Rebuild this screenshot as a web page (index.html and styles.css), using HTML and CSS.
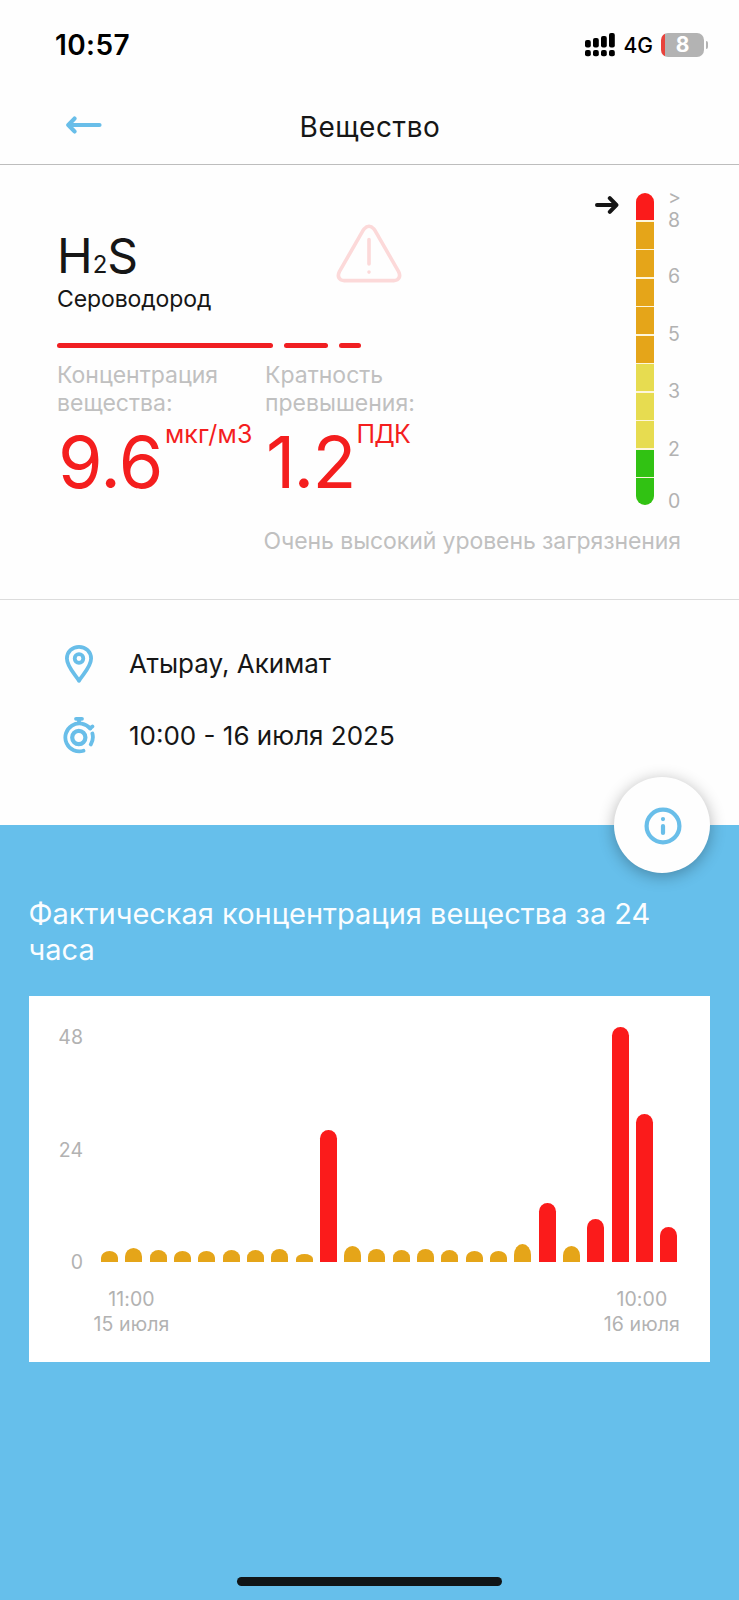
FILE: index.html
```html
<!DOCTYPE html>
<html lang="ru">
<head>
  <meta charset="UTF-8" />
  <meta name="viewport" content="width=device-width, initial-scale=1" />
  <title>Вещество</title>
  <link rel="stylesheet" href="styles.css">
</head>
<body>
  <!-- Статус-бар -->
  <div class="status-bar">
    <span class="time">10:57</span>
    <div class="status-icons">
      <svg class="signal" width="30" height="24" viewBox="0 0 30 24">
        <rect x="0" y="7" width="5.8" height="7.5" rx="2" />
        <rect x="8" y="5" width="5.8" height="9.5" rx="2" />
        <rect x="16" y="3" width="5.8" height="11.5" rx="2" />
        <rect x="24" y="0" width="5.8" height="14.5" rx="2" />
        <rect x="0" y="17" width="5.8" height="6.2" rx="2" />
        <rect x="8" y="17" width="5.8" height="6.2" rx="2" />
        <rect x="16" y="17" width="5.8" height="6.2" rx="2" />
        <rect x="24" y="17" width="5.8" height="6.2" rx="2" />
      </svg>
      <span class="network">4G</span>
      <div class="battery"><span>8</span></div>
      <div class="battery-tip"></div>
    </div>
  </div>

  <!-- Шапка -->
  <header class="header">
    <a class="back" href="#" aria-label="Назад">
      <svg width="36" height="18" viewBox="0 0 36 18" fill="none" stroke="#69bee9" stroke-width="4.2" stroke-linecap="round" stroke-linejoin="round">
        <path d="M33.5 9H2.5M8.5 2.6L2.3 9l6.2 6.4" />
      </svg>
    </a>
    <h1>Вещество</h1>
  </header>

  <!-- Текущее значение -->
  <section class="measure">
    <div class="measure-top">
      <div class="substance">
        <div class="substance-head">
          <div class="substance-title">
            <div class="formula">H<span>2</span>S</div>
            <div class="name">Сероводород</div>
          </div>
          <svg width="66" height="60" viewBox="0 0 66 60" fill="none" stroke="#fcd9d9" stroke-width="3.6" stroke-linecap="round" stroke-linejoin="round">
            <path d="M28.2 4.9Q33 -.5 37.8 4.9Q38.7 6 39.5 7.4L62.6 47.6Q65.2 53 61.2 55.7Q59.6 56.6 57.6 56.6H8.4Q6.4 56.6 4.8 55.7Q.8 53 3.4 47.6L26.5 7.4Q27.3 6 28.2 4.9Z" />
            <path d="M33 15.5V40M33 48V48.1" />
          </svg>
        </div>

        <div class="dashes">
          <i class="dash-long"></i>
          <i class="dash-mid"></i>
          <i class="dash-short"></i>
        </div>

        <div class="values">
          <div class="value">
            <p>Концентрация<br>вещества:</p>
            <div class="number"><b>9.6</b><sup class="unit">мкг/м3</sup></div>
          </div>
          <div class="value">
            <p>Кратность<br>превышения:</p>
            <div class="number ratio"><b>1.2</b><sup class="unit">ПДК</sup></div>
          </div>
        </div>
      </div>

      <div class="scale">
        <svg class="pointer" width="24" height="18" viewBox="0 0 24 18" fill="none" stroke="#151515" stroke-width="4" stroke-linecap="round" stroke-linejoin="round">
          <path d="M2 9H21M14.8 2.2L21.4 9l-6.6 6.8" />
        </svg>
        <div class="scale-bar">
          <i class="red"></i>
          <i class="orange"></i>
          <i class="orange"></i>
          <i class="orange"></i>
          <i class="orange"></i>
          <i class="orange"></i>
          <i class="yellow"></i>
          <i class="yellow"></i>
          <i class="yellow"></i>
          <i class="green"></i>
          <i class="green"></i>
        </div>
        <div class="scale-labels">
          <span class="top">&gt;<br>8</span>
          <span>6</span>
          <span>5</span>
          <span>3</span>
          <span>2</span>
          <span class="last">0</span>
        </div>
      </div>
    </div>
    <p class="verdict">Очень высокий уровень загрязнения</p>
  </section>

  <!-- Место и время -->
  <section class="place">
    <div class="place-row">
      <svg width="32" height="40" viewBox="0 0 32 40" fill="none" stroke="#69bee9" stroke-width="3.8" stroke-linejoin="round">
        <path d="M16 36.8C13.2 31.4 3.9 23.4 3.9 14.6C3.9 7.6 9.2 2.8 16 2.8S28.1 7.6 28.1 14.6C28.1 23.4 18.8 31.4 16 36.8Z" />
        <circle cx="16" cy="14.5" r="4.3" />
      </svg>
      <span>Атырау, Акимат</span>
    </div>
    <div class="place-row">
      <svg width="32" height="40" viewBox="0 0 32 40" fill="none" stroke="#69bee9" stroke-width="3.8" stroke-linecap="round">
        <path d="M13 3.8H19M16 4V8M27 13.2L29.4 11.4" />
        <path d="M20.5 35.8A14 14 0 1 1 27.2 13.6" />
        <path d="M29.4 18.5A14 14 0 0 1 27.8 29.4" />
        <circle cx="15.8" cy="22.5" r="6.6" stroke-width="4.2" />
      </svg>
      <span>10:00 - 16 июля 2025</span>
    </div>
  </section>

  <!-- График за сутки -->
  <section class="history">
    <button class="info" aria-label="Информация">
      <svg width="38" height="38" viewBox="0 0 38 38" fill="none" stroke="#69bee9" stroke-width="4.2" stroke-linecap="round">
        <circle cx="19" cy="19" r="16.4" />
        <path d="M19 19V26M19 12V12.1" />
      </svg>
    </button>

    <h2>Фактическая концентрация вещества за 24 часа</h2>

    <div class="card">
      <div class="plot">
        <div class="y-axis">
          <span>48</span>
          <span>24</span>
          <span>0</span>
        </div>
        <div class="bars">
          <i style="height: 11.3px"></i>
          <i style="height: 14.3px"></i>
          <i style="height: 12.3px"></i>
          <i style="height: 11.3px"></i>
          <i style="height: 11.3px"></i>
          <i style="height: 12.3px"></i>
          <i style="height: 12.3px"></i>
          <i style="height: 13.3px"></i>
          <i style="height: 8.3px"></i>
          <i class="high" style="height: 132.3px"></i>
          <i style="height: 16px"></i>
          <i style="height: 13.3px"></i>
          <i style="height: 12.3px"></i>
          <i style="height: 13.3px"></i>
          <i style="height: 12.3px"></i>
          <i style="height: 11.3px"></i>
          <i style="height: 11.3px"></i>
          <i style="height: 18.3px"></i>
          <i class="high" style="height: 59px"></i>
          <i style="height: 16px"></i>
          <i class="high" style="height: 43.3px"></i>
          <i class="high" style="height: 235px"></i>
          <i class="high" style="height: 148.3px"></i>
          <i class="high" style="height: 35.3px"></i>
        </div>
      </div>
      <div class="x-axis">
        <span>11:00<br>15 июля</span>
        <span>10:00<br>16 июля</span>
      </div>
    </div>

    <div class="home-bar"></div>
  </section>
</body>
</html>
```
FILE: styles.css
```css
* {
  box-sizing: border-box;
}

body {
  margin: 0;
  width: 739px;
  height: 1600px;
  overflow: hidden;
  display: flex;
  flex-direction: column;
  font-family: Inter, "Liberation Sans", sans-serif;
  color: #161616;
  background: #fefefe;
}

h1, h2, p {
  margin: 0;
  font-weight: normal;
}

svg {
  display: block;
  flex: none;
}

/* === СТАТУС-БАР === */
.status-bar {
  height: 89px;
  display: flex;
  align-items: center;
  justify-content: space-between;
  padding: 0 31px 0 55px;
  color: #000;
}

.time {
  font-size: 28px;
  font-weight: 600;
  letter-spacing: 0.4px;
}

.status-icons {
  display: flex;
  align-items: center;
}

.network {
  margin: 1px 8px 0 9px;
  font-size: 21px;
  font-weight: 500;
}

.battery {
  width: 43px;
  height: 24px;
  border-radius: 7px;
  background: linear-gradient(to right, #e8433c 4px, #b3b3b3 4px);
  color: #fff;
  font-size: 21px;
  font-weight: 700;
  line-height: 24px;
  text-align: center;
}

.battery-tip {
  width: 2px;
  height: 8px;
  margin-left: 2px;
  border-radius: 0 3px 3px 0;
  background: #b3b3b3;
}

/* === ШАПКА === */
.header {
  height: 76px;
  display: grid;
  grid-template-columns: 1fr auto 1fr;
  align-items: center;
  border-bottom: 1px solid #bdbdbd;
}

.back {
  margin: -4px 0 0 66px;
}

.header h1 {
  padding-left: 1px;
  font-size: 28px;
  letter-spacing: 0.6px;
}

/* === ТЕКУЩЕЕ ЗНАЧЕНИЕ === */
.measure {
  height: 435px;
  padding: 28px 58px 0 57px;
  border-bottom: 1px solid #dcdcdc;
}

.measure-top {
  display: flex;
  justify-content: space-between;
  height: 334px;
}

.substance {
  padding-top: 31px;
}

.substance-head {
  display: flex;
}

.substance-title {
  width: 279px;
  padding-top: 2px;
}

.formula {
  height: 59px;
  font-size: 48px;
  line-height: 59px;
}

.formula span {
  font-size: 24px;
}

.name {
  font-size: 23px;
  line-height: 29px;
  letter-spacing: -0.1px;
}

.dashes {
  display: flex;
  gap: 11px;
  margin-top: 29px;
}

.dashes i {
  height: 5px;
  border-radius: 3px;
  background: #f01f22;
}

.dash-long {
  width: 216px;
}

.dash-mid {
  width: 44px;
}

.dash-short {
  width: 22px;
}

.values {
  display: flex;
  margin-top: 13px;
}

.value {
  width: 208px;
}

.value p {
  font-size: 23px;
  line-height: 28px;
  color: #c0c0c0;
}

.number {
  display: flex;
  align-items: flex-start;
  margin: 4px 0 0 1px;
  color: #f41e1e;
}

.number b {
  font-size: 72px;
  font-weight: normal;
  line-height: 82px;
  letter-spacing: -0.5px;
}

.unit {
  margin-left: 2px;
  font-size: 25px;
  line-height: 27px;
  letter-spacing: 0.2px;
}

.ratio b {
  letter-spacing: -1.8px;
}

.ratio .unit {
  letter-spacing: -0.8px;
}

/* === ШКАЛА === */
.scale {
  display: flex;
}

.pointer {
  margin: 3px 17px 0 0;
}

.scale-bar {
  width: 18px;
  height: 312px;
  display: flex;
  flex-direction: column;
  gap: 1.5px;
  border-radius: 9px;
  overflow: hidden;
  background: #fdf6dc;
}

.scale-bar i {
  flex: 1;
}

.red { background: #fb1b1b; }
.orange { background: #e5a519; }
.yellow { background: #e7dc50; }
.green { background: #31c213; }

.scale-labels {
  display: flex;
  flex-direction: column;
  margin: -7px 0 0 14px;
  font-size: 19.5px;
  line-height: 57.5px;
  color: #b2b2b2;
}

.scale-labels .top {
  margin-bottom: 16px;
  line-height: 23px;
}

.scale-labels .last {
  line-height: 47px;
}

.verdict {
  font-size: 23px;
  line-height: 29px;
  letter-spacing: -0.08px;
  text-align: right;
  color: #c0c0c0;
}

/* === МЕСТО И ВРЕМЯ === */
.place {
  height: 225px;
  padding: 28px 0 0 63px;
}

.place-row {
  height: 71.5px;
  display: flex;
  align-items: center;
  gap: 34px;
  font-size: 26px;
}

/* === ГРАФИК === */
.history {
  position: relative;
  flex: 1;
  display: flex;
  flex-direction: column;
  padding: 71px 29px 14px 28.5px;
  background: #66bfeb;
}

.info {
  position: absolute;
  top: -48px;
  right: 29px;
  width: 96px;
  height: 96px;
  display: grid;
  place-items: center;
  padding: 2px 0 0 2px;
  border: 0;
  border-radius: 50%;
  background: #fefefe;
  box-shadow: 0 3px 16px rgba(0, 0, 0, 0.3);
}

.history h2 {
  font-size: 29px;
  line-height: 36px;
  color: #fafdff;
}

.card {
  height: 366px;
  margin-top: 28px;
  padding: 31px 30px 0 28.5px;
  background: #fff;
  color: #b2b2b2;
  font-size: 19.5px;
}

.plot {
  display: flex;
  gap: 18px;
  padding-right: 2.5px;
}

.y-axis {
  width: 26px;
  height: 245px;
  display: flex;
  flex-direction: column;
  justify-content: space-between;
  text-align: right;
  line-height: 20px;
}

.bars {
  flex: 1;
  height: 235px;
  display: flex;
  align-items: flex-end;
  justify-content: space-between;
}

.bars i {
  width: 17px;
  border-radius: 50% 50% 0 0 / 60% 60% 0 0;
  background: #e5a519;
}

.bars .high {
  border-radius: 9px 9px 0 0;
  background: #fb1b1b;
}

.x-axis {
  display: flex;
  justify-content: space-between;
  margin: 15px 0 0 36.5px;
  line-height: 24.5px;
  letter-spacing: 0.1px;
  text-align: center;
}

.home-bar {
  width: 265px;
  height: 9px;
  margin: auto auto 0;
  border-radius: 5px;
  background: #101517;
}
```
